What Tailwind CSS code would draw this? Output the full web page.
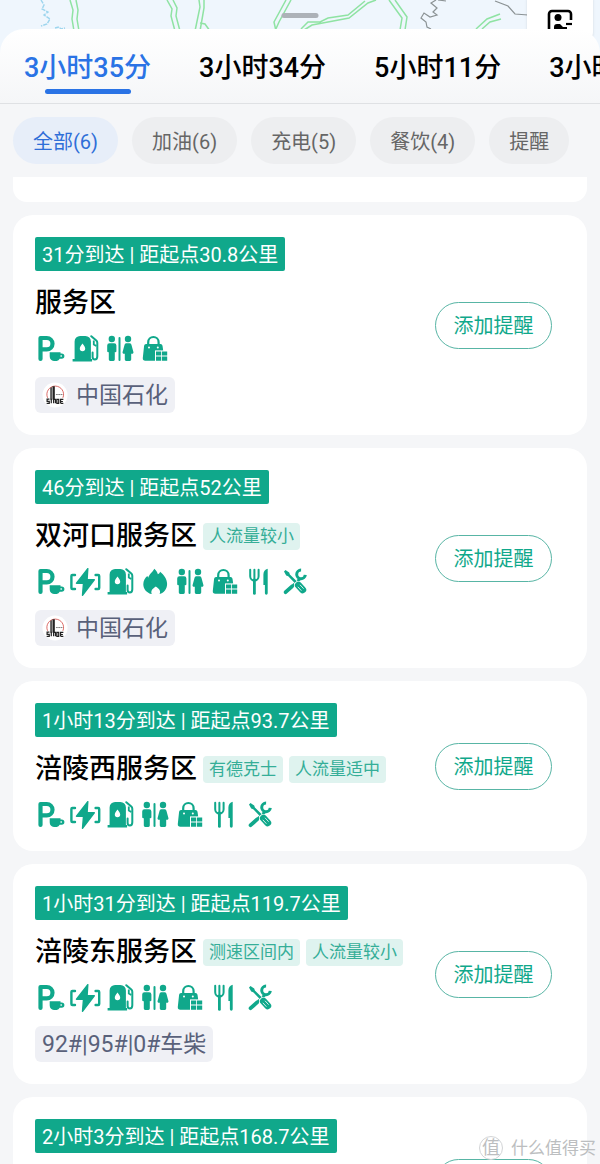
<!DOCTYPE html>
<html lang="zh-CN">
<head>
  <meta charset="UTF-8" />
  <meta name="viewport" content="width=device-width, initial-scale=1.0"/>
  <title>沿途服务区</title>
  <script src="https://cdn.jsdelivr.net/npm/@tailwindcss/browser@4"></script>
</head>
<body class="relative h-screen overflow-hidden bg-[#f5f6f8] font-[Roboto,'Noto_Sans_CJK_SC',sans-serif] text-black">

<!-- Icon set -->
<svg class="hidden">
  <symbol id="parking" viewBox="0 0 32 28">
    <path d="M5.500 24V3h6.300a5.700 5.700 0 0 1 0 11.400H5.500" fill="none" stroke="currentColor" stroke-width="4.200" stroke-linecap="round" stroke-linejoin="round"/>
    <path d="M14.700 17.200h10.800v1.200h1.200a2.500 2.500 0 0 1 0 5.400h-2a4 4 0 0 1-3 2.200h-2.800c-2.600 0-4.200-2-4.200-4.700z" fill="currentColor" stroke="#fff" stroke-width="1.200" paint-order="stroke"/>
    <path d="M25.500 20.200h.8a.8.8 0 0 1 0 1.600h-.8z" fill="#fff"/>
  </symbol>
  <symbol id="charge" viewBox="0 0 32 28">
    <path d="M5 7H2.400a1 1 0 0 0-1 1v12a1 1 0 0 0 1 1H5M25.600 7h2.600a1 1 0 0 1 1 1v12a1 1 0 0 1-1 1h-2.600" fill="none" stroke="currentColor" stroke-width="2.400" stroke-linecap="round"/>
    <path d="M17.800.6 6.500 15.200h7l-1 12 11.800-15.400h-7.200z" fill="currentColor" stroke="currentColor" stroke-width="1.400" stroke-linejoin="round"/>
  </symbol>
  <symbol id="fuel" viewBox="0 0 32 28">
    <path d="M4.600 24V6.500A5.500 5.500 0 0 1 10.100 1H15.400a5.500 5.500 0 0 1 5.500 5.500V24h1.200v2.600H2.600V24z" fill="currentColor"/>
    <path d="M12.500 8.600c1.600 2.100 2.700 3.500 2.700 5a2.700 2.700 0 0 1-5.400 0c0-1.500 1.100-2.900 2.700-5z" fill="#fff"/>
    <path d="M21.300 1.200l5 4.300c.7.600 1 1.300 1 2.200v13.500c0 2.200-1 3.200-2.500 3.200s-2.200-1-2.200-2.400v-4.500" fill="none" stroke="currentColor" stroke-width="2" stroke-linecap="round" stroke-linejoin="round"/>
    <path d="M23.800 5.500v4l2.500 1.500" fill="none" stroke="currentColor" stroke-width="1.800"/>
  </symbol>
  <symbol id="restroom" viewBox="0 0 32 28">
    <g fill="currentColor">
      <circle cx="6.800" cy="4" r="3.200"/>
      <path d="M4.500 8.300h4.600a2.300 2.300 0 0 1 2.300 2.300v5.600a1 1 0 0 1-1.600.8v7.600a1.400 1.400 0 0 1-1.400 1.400H5.200a1.400 1.400 0 0 1-1.400-1.400V17a1 1 0 0 1-1.600-.8v-5.600a2.300 2.300 0 0 1 2.300-2.300z"/>
      <rect x="13.500" y="2" width="2" height="24" rx="1"/>
      <circle cx="23" cy="4" r="3.200"/>
      <path d="M21.500 8.300h3c1 0 1.700.6 2 1.600l1.900 7c.3 1-.4 1.900-1.400 1.900h-.8v5.800a1.400 1.400 0 0 1-1.400 1.400h-3.600a1.400 1.400 0 0 1-1.400-1.400v-5.800H19c-1 0-1.700-.9-1.400-1.900l1.900-7c.3-1 1-1.600 2-1.600z"/>
    </g>
  </symbol>
  <symbol id="shop" viewBox="0 0 32 28">
    <path d="M8.200 10V7.200a5.200 5.200 0 0 1 10.400 0V10" fill="none" stroke="currentColor" stroke-width="2.200"/>
    <path d="M6 9h14.500a2 2 0 0 1 2 1.700l2.200 15H5.300A2.500 2.500 0 0 1 2.800 23l1.300-12.300A2 2 0 0 1 6 9z" fill="currentColor"/>
    <circle cx="9" cy="12.500" r="1" fill="#fff"/>
    <circle cx="17.800" cy="12.500" r="1" fill="#fff"/>
    <rect x="15" y="15.400" width="13" height="11.600" fill="#fff"/>
    <path d="M16 16.400h5.200v4.200H16zM22 16.400h5.200v4.200H22zM16 21.400h5.200v4.400H16zM22 21.400h5.200v4.400H22z" fill="currentColor"/>
  </symbol>
  <symbol id="fire" viewBox="0 0 32 28">
    <path d="M14.300.8c1.800 1.600 3 3.400 3.600 5.500 1.200-.5 1.900-1.300 2.200-2.500 3.900 3.200 7 7.500 7 12.200 0 5-3.200 9-7.500 10.100 1.200-2.700.3-5-3.800-7.600-4.100 2.600-5.200 4.900-4 7.600C6.900 25.100 3.300 21.100 3.300 16.200c0-3.600 1.800-6.200 4-8.200l1 1.700C9 6.500 12.500 4.300 14.300.8z" fill="currentColor"/>
  </symbol>
  <symbol id="food" viewBox="0 0 32 28">
    <path d="M5.200 1.800v6.400a4.200 4.200 0 0 0 8.400 0V1.800M9.400 1.800V12" fill="none" stroke="currentColor" stroke-width="2" stroke-linecap="round"/>
    <path d="M9.400 12v13.400" fill="none" stroke="currentColor" stroke-width="2.800" stroke-linecap="round"/>
    <path d="M22.700.8v24.500a1.400 1.400 0 0 1-2.800 0V17h-1.500V6.500c0-3 1.600-5 4.300-5.700z" fill="currentColor"/>
  </symbol>
  <symbol id="repair" viewBox="0 0 32 28">
    <path d="M5.600 24.200l6.200-5.600" stroke="currentColor" stroke-width="3.800" stroke-linecap="round"/>
    <path d="M12 18.500l8-7.700" stroke="currentColor" stroke-width="2.800"/>
    <path d="M25.300 6.800a4.300 4.300 0 1 1-4.200-4.700" fill="none" stroke="currentColor" stroke-width="3"/>
    <path d="M5.500 3.500l11 11.500" stroke="#fff" stroke-width="4"/>
    <path d="M4 3.600l1.500-1.500 3.700 2.300.7 2L17 13.600l-1.800 1.800-7-7.200-2-.8z" fill="currentColor"/>
    <path d="M18.200 17.200l4.800 5" stroke="#fff" stroke-width="8.400" stroke-linecap="round"/>
    <path d="M18.400 17.200l4.300 4.600" stroke="currentColor" stroke-width="7" stroke-linecap="round"/>
    <path d="M17.800 18.800l3.600 3.900M20 16.800l3.600 3.900" stroke="#fff" stroke-width=".8"/>
  </symbol>
  <symbol id="sinopec" viewBox="0 0 28 28">
    <circle cx="14" cy="14" r="13.500" fill="#fff"/>
    <path d="M6 17a9 9 0 1 1 16.500 0" fill="none" stroke="#d8605c" stroke-width="1"/>
    <path d="M9 19V6.500l1.500-1V19zM11.300 19V4.500h2.500V19z" fill="#222"/>
    <path d="M15 13.500h7" stroke="#777" stroke-width="1" stroke-dasharray="2 .5"/>
    <path d="M8 18.500H5.500v2.300h2.300V23H5M10 18v5M12.500 23v-4.300h2V23M16 18.700h2V23h-2zM20 23v-4.300h3M20 21h2.500M20 23h3" fill="none" stroke="#222" stroke-width="1.300"/>
  </symbol>
</svg>

<!-- Map + route tabs -->
<header class="relative overflow-hidden bg-[#eff6fd] pt-[29px]">
  <svg class="absolute top-0 left-0" width="600" height="60" viewBox="0 0 600 60" fill="none">
    <g stroke="#8fe3a3" stroke-width="1.500">
      <path d="M70 0l3 10-1 9 2 12M76 0l2 10-1 9 2 12"/>
      <path d="M167 0l5 9-1 7 4 15M173 0l4 8-1 8 4 15"/>
      <path d="M199 0l1 7-5 24M204 0v8l-4 23M200 23l5 1 5 7"/>
      <path d="M286 0l-12 22 2 9M291 0l-12 22-4 9"/>
      <path d="M301 29l7-7h12l8-4 20-3 17-14M304 30l8-5 16-3 21-4 19-15 8-3"/>
      <path d="M389 0l13 18-2 12M395 0l12 17-2 13"/>
      <path d="M476 29l11-10 13-5M482 29l8-7 11-3"/>
    </g>
    <path d="M41 0l3 5-2 4 6 3-4 3 6 4-3 5-6 2M55 28l4-1 2 2 4-1" stroke="#9dd5ee" stroke-width="1.400" stroke-dasharray="4 1"/>
    <path d="M436 0l-5 3 6 5-4 4 4 3-7 2-6-4-3 5 5 4 1 5 4 2M495 1l13 5 7 8 13 1M438 0l8 1" stroke="#8b9294" stroke-width="1.200"/>
  </svg>
  <div class="absolute top-[13px] left-1/2 h-[5px] w-[37px] -translate-x-1/2 rounded-full bg-[#adb2b8]"></div>
  <button aria-label="街景" class="absolute -top-3 right-[7px] h-14 w-[66px] rounded-xl bg-white shadow-sm">
    <svg class="absolute top-[21px] left-5" width="26" height="26" viewBox="0 0 26 26" fill="none">
      <path d="M24 11V5a3 3 0 0 0-3-3H5a3 3 0 0 0-3 3v16" stroke="#000" stroke-width="2.600"/>
      <circle cx="11" cy="8.500" r="3.500" fill="#000"/>
      <path d="M7 24v-6a3 3 0 0 1 3-3h3l3 3h4v3h-5v3z" fill="#000"/>
      <path d="M19 15h6" stroke="#000" stroke-width="2.200"/>
    </svg>
  </button>
  <nav class="relative flex h-[75px] gap-12 overflow-hidden rounded-t-3xl border-b border-[#dfe1e4] bg-linear-to-b from-white to-[#f5f6f8] pl-6 text-[27px] font-medium whitespace-nowrap">
    <a href="#" class="flex shrink-0 flex-col items-center pt-[19px] leading-10 text-[#2a73e5]">
      3小时35分
      <span class="mt-px h-[5px] w-[86px] rounded-full bg-[#2a73e5]"></span>
    </a>
    <a href="#" class="shrink-0 pt-[19px] leading-10">3小时34分</a>
    <a href="#" class="shrink-0 pt-[19px] leading-10">5小时11分</a>
    <a href="#" class="shrink-0 pt-[19px] leading-10">3小时52分</a>
  </nav>
</header>

<!-- Filters -->
<div class="flex gap-[14px] p-[13px] text-xl whitespace-nowrap text-[#666]">
  <button class="h-[47px] rounded-full bg-[#e7eef9] px-5 pt-[3px] text-[#2f6fd8]">全部(6)</button>
  <button class="h-[47px] rounded-full bg-[#edeef0] px-5 pt-[3px]">加油(6)</button>
  <button class="h-[47px] rounded-full bg-[#edeef0] px-5 pt-[3px]">充电(5)</button>
  <button class="h-[47px] rounded-full bg-[#edeef0] px-5 pt-[3px]">餐饮(4)</button>
  <button class="h-[47px] rounded-full bg-[#edeef0] px-5 pt-[3px]">提醒</button>
</div>

<!-- Service areas -->
<main class="flex flex-col gap-[13px] px-[13px] text-[#10a88b]">
  <div class="h-[25px] rounded-b-[14px] bg-white"></div>

  <section class="flex items-center justify-between rounded-[20px] bg-white py-[22px] pr-[35px] pl-[22px]">
    <div class="flex flex-col items-start">
      <p class="rounded-xs bg-[#10a88b] px-[7px] pt-[2px] text-xl leading-8 text-white">31分到达 | 距起点30.8公里</p>
      <h2 class="mt-[18px] text-[27px] leading-7 font-medium text-black">服务区</h2>
      <div class="mt-[18px] flex gap-[3px]">
        <svg class="h-7 w-8"><use href="#parking"/></svg>
        <svg class="h-7 w-8"><use href="#fuel"/></svg>
        <svg class="h-7 w-8"><use href="#restroom"/></svg>
        <svg class="h-7 w-8"><use href="#shop"/></svg>
      </div>
      <p class="mt-[14px] flex h-9 items-center gap-2 rounded-md bg-[#eff0f5] px-[7px] text-[23px] text-[#59617a]">
        <svg class="h-[26px] w-[26px]"><use href="#sinopec"/></svg><span class="pt-[3px]">中国石化</span>
      </p>
    </div>
    <button class="h-[47px] w-[117px] rounded-full border border-[#58b5a5] pt-[2px] text-xl">添加提醒</button>
  </section>

  <section class="flex items-center justify-between rounded-[20px] bg-white py-[22px] pr-[35px] pl-[22px]">
    <div class="flex flex-col items-start">
      <p class="rounded-xs bg-[#10a88b] px-[7px] pt-[2px] text-xl leading-8 text-white">46分到达 | 距起点52公里</p>
      <div class="mt-[18px] flex items-center gap-[6px]">
        <h2 class="text-[27px] leading-7 font-medium text-black">双河口服务区</h2>
        <span class="rounded-sm bg-[#dff3ef] px-[6px] text-[17px] leading-[27px] text-[#35ae98]">人流量较小</span>
      </div>
      <div class="mt-[18px] flex gap-[3px]">
        <svg class="h-7 w-8"><use href="#parking"/></svg>
        <svg class="h-7 w-8"><use href="#charge"/></svg>
        <svg class="h-7 w-8"><use href="#fuel"/></svg>
        <svg class="h-7 w-8"><use href="#fire"/></svg>
        <svg class="h-7 w-8"><use href="#restroom"/></svg>
        <svg class="h-7 w-8"><use href="#shop"/></svg>
        <svg class="h-7 w-8"><use href="#food"/></svg>
        <svg class="h-7 w-8"><use href="#repair"/></svg>
      </div>
      <p class="mt-[14px] flex h-9 items-center gap-2 rounded-md bg-[#eff0f5] px-[7px] text-[23px] text-[#59617a]">
        <svg class="h-[26px] w-[26px]"><use href="#sinopec"/></svg><span class="pt-[3px]">中国石化</span>
      </p>
    </div>
    <button class="h-[47px] w-[117px] rounded-full border border-[#58b5a5] pt-[2px] text-xl">添加提醒</button>
  </section>

  <section class="flex items-center justify-between rounded-[20px] bg-white py-[22px] pr-[35px] pl-[22px]">
    <div class="flex flex-col items-start">
      <p class="rounded-xs bg-[#10a88b] px-[7px] pt-[2px] text-xl leading-8 text-white">1小时13分到达 | 距起点93.7公里</p>
      <div class="mt-[18px] flex items-center gap-[6px]">
        <h2 class="text-[27px] leading-7 font-medium text-black">涪陵西服务区</h2>
        <span class="rounded-sm bg-[#dff3ef] px-[6px] text-[17px] leading-[27px] text-[#35ae98]">有德克士</span>
        <span class="rounded-sm bg-[#dff3ef] px-[6px] text-[17px] leading-[27px] text-[#35ae98]">人流量适中</span>
      </div>
      <div class="mt-[18px] flex gap-[3px]">
        <svg class="h-7 w-8"><use href="#parking"/></svg>
        <svg class="h-7 w-8"><use href="#charge"/></svg>
        <svg class="h-7 w-8"><use href="#fuel"/></svg>
        <svg class="h-7 w-8"><use href="#restroom"/></svg>
        <svg class="h-7 w-8"><use href="#shop"/></svg>
        <svg class="h-7 w-8"><use href="#food"/></svg>
        <svg class="h-7 w-8"><use href="#repair"/></svg>
      </div>
    </div>
    <button class="h-[47px] w-[117px] rounded-full border border-[#58b5a5] pt-[2px] text-xl">添加提醒</button>
  </section>

  <section class="flex items-center justify-between rounded-[20px] bg-white py-[22px] pr-[35px] pl-[22px]">
    <div class="flex flex-col items-start">
      <p class="rounded-xs bg-[#10a88b] px-[7px] pt-[2px] text-xl leading-8 text-white">1小时31分到达 | 距起点119.7公里</p>
      <div class="mt-[18px] flex items-center gap-[6px]">
        <h2 class="text-[27px] leading-7 font-medium text-black">涪陵东服务区</h2>
        <span class="rounded-sm bg-[#dff3ef] px-[6px] text-[17px] leading-[27px] text-[#35ae98]">测速区间内</span>
        <span class="rounded-sm bg-[#dff3ef] px-[6px] text-[17px] leading-[27px] text-[#35ae98]">人流量较小</span>
      </div>
      <div class="mt-[18px] flex gap-[3px]">
        <svg class="h-7 w-8"><use href="#parking"/></svg>
        <svg class="h-7 w-8"><use href="#charge"/></svg>
        <svg class="h-7 w-8"><use href="#fuel"/></svg>
        <svg class="h-7 w-8"><use href="#restroom"/></svg>
        <svg class="h-7 w-8"><use href="#shop"/></svg>
        <svg class="h-7 w-8"><use href="#food"/></svg>
        <svg class="h-7 w-8"><use href="#repair"/></svg>
      </div>
      <p class="mt-[14px] flex h-9 items-center rounded-md bg-[#eff0f5] px-[7px] text-[23px] text-[#59617a]"><span class="pt-[3px]">92#|95#|0#车柴</span></p>
    </div>
    <button class="h-[47px] w-[117px] rounded-full border border-[#58b5a5] pt-[2px] text-xl">添加提醒</button>
  </section>

  <section class="flex h-[170px] items-center justify-between rounded-[20px] bg-white py-[22px] pr-[35px] pl-[22px]">
    <p class="self-start rounded-xs bg-[#10a88b] px-[7px] pt-[2px] text-xl leading-8 text-white">2小时3分到达 | 距起点168.7公里</p>
    <button class="h-[47px] w-[117px] rounded-full border border-[#58b5a5] pt-[2px] text-xl">添加提醒</button>
  </section>
</main>

<!-- Watermark -->
<div class="absolute right-1 bottom-1 flex items-center gap-2 text-[#bcbec0]">
  <span class="flex size-6 items-center justify-center rounded-full border border-[#d2d4d6] text-lg leading-none">值</span>
  <span class="text-[17px] leading-6">什么值得买</span>
</div>

</body>
</html>
